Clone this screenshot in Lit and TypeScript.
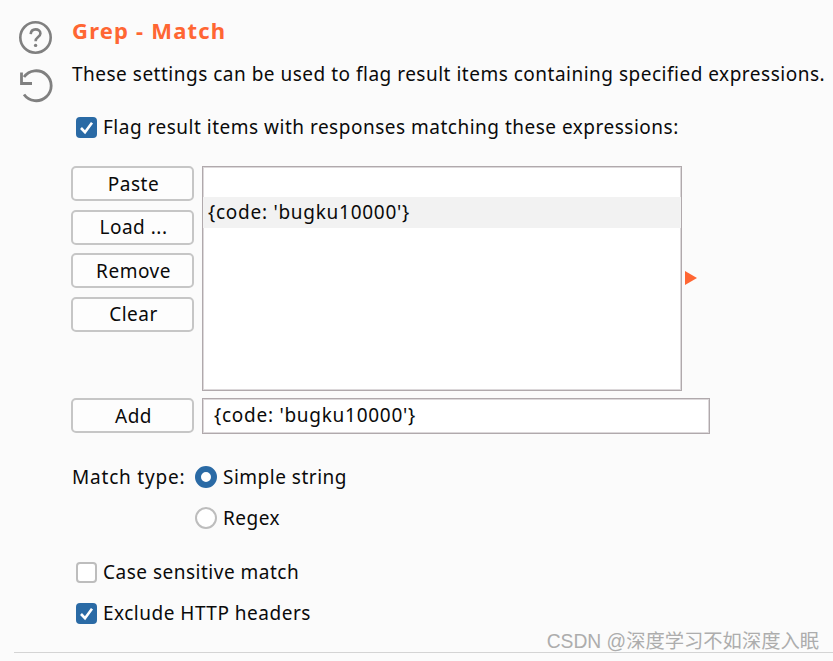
import { LitElement, html, css, svg } from "lit";
import { customElement } from "lit/decorators.js";

const check = svg`<svg class="tick" viewBox="0 0 21 21" width="21" height="21"><path d="M5 11 L9 15.2 L16 5.8" fill="none" stroke="#fff" stroke-width="2.6"/></svg>`;

@customElement("app-root")
export class AppRoot extends LitElement {
  static styles = css`
    :host {
      display: block;
      position: relative;
      width: 833px;
      height: 661px;
      overflow: hidden;
      background: #fbfbfb;
      color: #0a0a0a;
      font-family: "Noto Sans", "Open Sans", sans-serif;
      font-size: 19px;
      letter-spacing: 0.5px;
    }
    .page {
      display: grid;
      grid-template-columns: 58px 1fr;
      height: 653px;
      box-sizing: border-box;
      border-bottom: 1px solid #d4d4d4;
      margin-left: 14px;
    }
    .rail {
      display: flex;
      flex-direction: column;
      align-items: flex-start;
      padding: 19px 0 0 4px;
      gap: 13px;
    }
    .rail svg { display: block; }
    .main { display: flex; flex-direction: column; min-width: 0; }
    h1 {
      margin: 14px 0 0;
      height: 32px;
      line-height: 32px;
      font-size: 22px;
      font-weight: 700;
      letter-spacing: 1.2px;
      color: #ff6633;
    }
    .desc { margin: 14px 0 0; height: 28px; line-height: 28px; white-space: nowrap; }
    .check {
      display: flex;
      align-items: center;
      gap: 6px;
      margin-left: 4px;
      height: 28px;
      white-space: nowrap;
    }
    .box {
      width: 21px;
      height: 21px;
      box-sizing: border-box;
      border-radius: 4px;
      flex: none;
      background: #fff;
      border: 2px solid #bdbdbd;
    }
    .box.on { background: #2a6aa5; border: 0; }
    .tick { display: block; }
    .flag { margin-top: 25px; }
    .editor {
      display: grid;
      grid-template-columns: 122px 1fr;
      column-gap: 8px;
      margin-top: 25px;
    }
    .buttons { display: flex; flex-direction: column; gap: 8.5px; }
    button {
      display: block;
      box-sizing: border-box;
      width: 123px;
      height: 35px;
      margin-left: -1px;
      padding: 0 0 0 2px;
      background: #fdfdfd;
      border: 2px solid #c6c6c6;
      border-radius: 5px;
      color: inherit;
      font: inherit;
      letter-spacing: inherit;
    }
    .list {
      box-sizing: border-box;
      width: 480px;
      height: 225px;
      background: #fff;
      border: 1px solid #b0a9ac;
      box-shadow: inset 0 0 0 1px #dcd8da;
      padding-top: 30px;
    }
    .item {
      height: 31px;
      line-height: 30px;
      padding-left: 5px;
      background: #f2f2f2;
      letter-spacing: 0.73px;
    }
    .add { margin-top: 7px; }
    .input {
      box-sizing: border-box;
      width: 508px;
      height: 36px;
      line-height: 33px;
      background: #fff;
      border: 1px solid #b0a9ac;
      box-shadow: inset 0 0 0 1px #dcd8da;
      padding-left: 11px;
      letter-spacing: 0.73px;
    }
    .arrow {
      position: absolute;
      left: 685px;
      top: 271px;
      width: 0;
      height: 0;
      border-left: 12px solid #ff6633;
      border-top: 7.5px solid transparent;
      border-bottom: 7.5px solid transparent;
    }
    .type {
      display: grid;
      grid-template-columns: 123px 1fr;
      grid-auto-rows: 41px;
      align-items: center;
      margin-top: 22px;
      white-space: nowrap;
    }
    .type > span:first-child { letter-spacing: 0.8px; }
    .opt { display: flex; align-items: center; gap: 6px; }
    .radio {
      width: 22px;
      height: 22px;
      box-sizing: border-box;
      border-radius: 50%;
      background: #fff;
      border: 2px solid #bdbdbd;
    }
    .radio.on { border: 6px solid #2a6aa5; }
    .case { margin-top: 20px; }
    .excl { margin-top: 13px; }
    .mark {
      position: absolute;
      right: 14px;
      top: 629px;
      line-height: 26px;
      font-family: "Liberation Sans", "Noto Sans CJK SC", sans-serif;
      font-size: 19.3px;
      letter-spacing: 0;
      color: #adadad;
      white-space: nowrap;
    }
  `;

  render() {
    return html`
      <div class="page">
        <div class="rail">
          <svg width="36" height="36" viewBox="0 0 36 36" fill="none" stroke="#808080" stroke-width="2.6">
            <circle cx="17.5" cy="18.5" r="15.2" />
            <path d="M12.7 15.2 C12.9 11.8 15 10.4 17.6 10.4 C20.4 10.4 22.4 12.1 22.4 14.5 C22.4 18 17.6 18.2 17.6 22.2" />
            <circle cx="17.6" cy="26.4" r="1.7" fill="#808080" stroke="none" />
          </svg>
          <svg width="36" height="36" viewBox="0 0 36 36" fill="none" stroke="#808080" stroke-width="2.8">
            <path d="M6 26.5 A15 15 0 1 0 6 9" />
            <path d="M3.5 4.5 V15.5 H14" />
          </svg>
        </div>
        <div class="main">
          <h1>Grep - Match</h1>
          <p class="desc">These settings can be used to flag result items containing specified expressions.</p>
          <label class="check flag">
            <span class="box on">${check}</span>Flag result items with responses matching these expressions:
          </label>
          <div class="editor">
            <div class="buttons">
              <button>Paste</button>
              <button>Load ...</button>
              <button>Remove</button>
              <button>Clear</button>
            </div>
            <div class="list"><div class="item">{code: 'bugku10000'}</div></div>
          </div>
          <div class="editor add">
            <button>Add</button>
            <div class="input">{code: 'bugku10000'}</div>
          </div>
          <div class="type">
            <span>Match type:</span>
            <span class="opt"><span class="radio on"></span>Simple string</span>
            <span></span>
            <span class="opt"><span class="radio"></span>Regex</span>
          </div>
          <label class="check case"><span class="box"></span>Case sensitive match</label>
          <label class="check excl"><span class="box on">${check}</span>Exclude HTTP headers</label>
        </div>
      </div>
      <div class="arrow"></div>
      <div class="mark">CSDN @深度学习不如深度入眠</div>
    `;
  }
}
